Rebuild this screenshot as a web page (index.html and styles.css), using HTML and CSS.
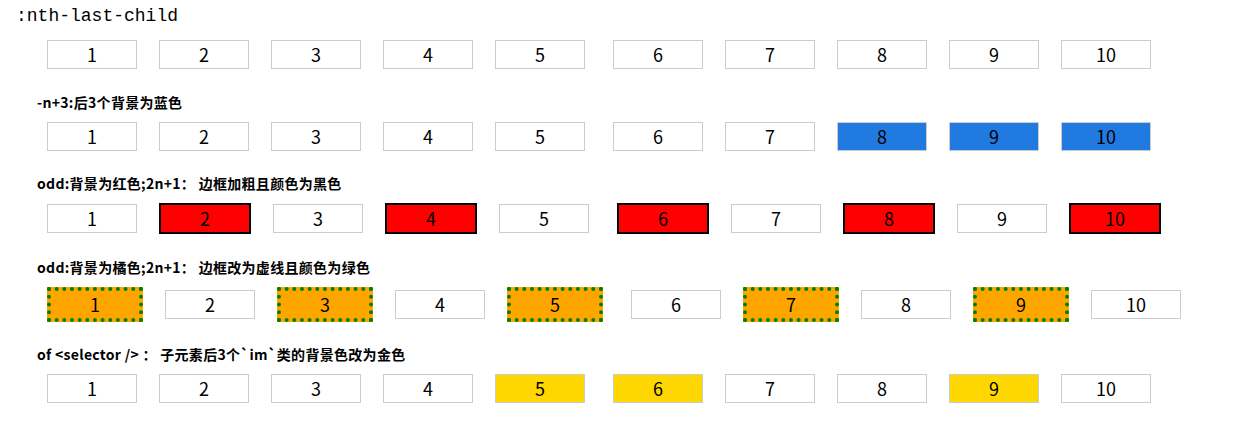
FILE: index.html
```html
<!DOCTYPE html>
<html lang="zh">
<head>
<meta charset="utf-8">
<title>:nth-last-child</title>
<link rel="stylesheet" href="styles.css">
</head>
<body>
<div class="page">
  <div class="title">:nth-last-child</div>
  <div class="row first">
    <span class="box">1</span><span class="box">2</span><span class="box">3</span><span class="box">4</span><span class="box">5</span><span class="box">6</span><span class="box">7</span><span class="box">8</span><span class="box">9</span><span class="box">10</span>
  </div>

  <div class="label">-n+3:后3个背景为蓝色</div>
  <div class="row">
    <span class="box">1</span><span class="box">2</span><span class="box">3</span><span class="box">4</span><span class="box">5</span><span class="box">6</span><span class="box">7</span><span class="box blue">8</span><span class="box blue">9</span><span class="box blue">10</span>
  </div>

  <div class="label">odd:背景为红色;2n+1： 边框加粗且颜色为黑色</div>
  <div class="row">
    <span class="box">1</span><span class="box red">2</span><span class="box">3</span><span class="box red">4</span><span class="box">5</span><span class="box red">6</span><span class="box">7</span><span class="box red">8</span><span class="box">9</span><span class="box red">10</span>
  </div>

  <div class="label">odd:背景为橘色;2n+1： 边框改为虚线且颜色为绿色</div>
  <div class="row">
    <span class="box orange">1</span><span class="box">2</span><span class="box orange">3</span><span class="box">4</span><span class="box orange">5</span><span class="box">6</span><span class="box orange">7</span><span class="box">8</span><span class="box orange">9</span><span class="box">10</span>
  </div>

  <div class="label">of &lt;selector /&gt; ： 子元素后3个`im`类的背景色改为金色</div>
  <div class="row">
    <span class="box">1</span><span class="box">2</span><span class="box">3</span><span class="box">4</span><span class="box gold">5</span><span class="box gold">6</span><span class="box">7</span><span class="box">8</span><span class="box gold">9</span><span class="box">10</span>
  </div>
</div>
</body>
</html>
```

FILE: styles.css
```css
html, body {
  margin: 0;
  padding: 0;
  background: #fff;
}

.page {
  padding: 6px 0 0 37px;
  color: #000;
}

.title {
  font-family: "Liberation Mono", "DejaVu Sans Mono", monospace;
  font-size: 18px;
  line-height: 20px;
  height: 20px;
  margin-left: -21px;
}

.label {
  font-family: "Noto Sans CJK SC", "Noto Sans", sans-serif;
  font-weight: bold;
  font-size: 14px;
  line-height: 20px;
  margin-top: 22.5px;
  letter-spacing: 0.3px;
}

.row {
  display: flex;
  align-items: center;
  gap: 22px;
  margin-left: 10px;
  margin-top: 10px;
}

.row.first {
  margin-top: 14px;
}

.box {
  display: block;
  width: 88px;
  height: 27px;
  line-height: 27px;
  border: 1px solid #ccc;
  text-align: center;
  font-family: "Noto Sans CJK SC", "Noto Sans", sans-serif;
  font-size: 18px;
  font-weight: 400;
  color: #000;
}

.box:nth-child(6) {
  margin-left: 6px;
}

.blue {
  background: #207ae0;
}

.red {
  background: #ff0000;
  border: 2px solid #000;
}

.orange {
  background: #ffa500;
  border: 4px dotted #008000;
}

.gold {
  background: #ffd700;
}
```
